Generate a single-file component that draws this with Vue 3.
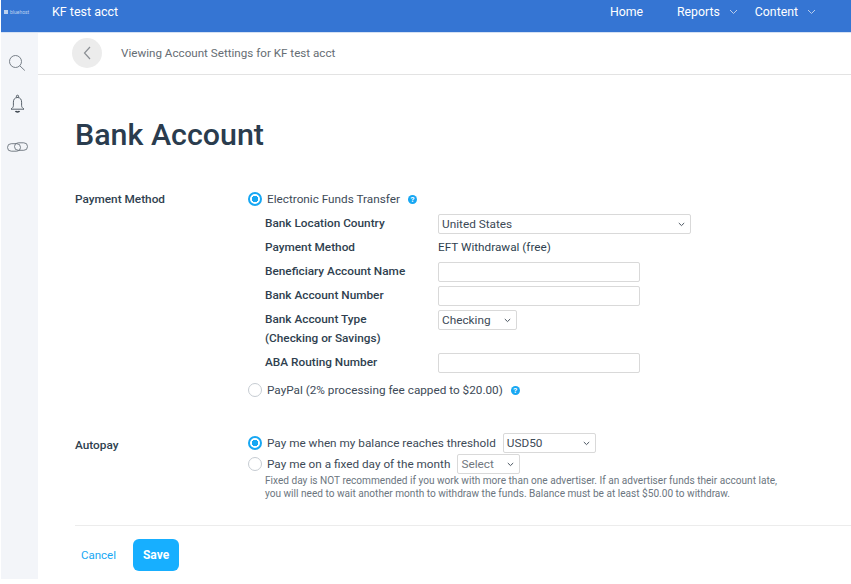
<template>
  <div class="page">
    <header class="topbar">
      <div class="brand"><span class="brand-mark"></span>bluehost</div>
      <div class="account">KF test acct</div>
      <nav class="nav">
        <a class="nav-item nav-home">Home</a>
        <a class="nav-item nav-reports">Reports
          <svg class="nav-caret" width="9" height="6" viewBox="0 0 9 6"><path d="M1 1l3.500 3.500L8 1" fill="none" stroke="#b9cdec" stroke-width="1"/></svg>
        </a>
        <a class="nav-item nav-content">Content
          <svg class="nav-caret" width="9" height="6" viewBox="0 0 9 6"><path d="M1 1l3.500 3.500L8 1" fill="none" stroke="#b9cdec" stroke-width="1"/></svg>
        </a>
      </nav>
    </header>

    <div class="shell">
      <aside class="sidebar">
        <svg class="side-icon" width="16" height="16" viewBox="0 0 16 16" fill="none" stroke="#6a737c" stroke-width=".9">
          <circle cx="6.500" cy="6.500" r="6"/>
          <path d="M10.800 10.800l5 4.700"/>
        </svg>
        <svg class="side-icon" width="15" height="20" viewBox="0 0 15 20" fill="none" stroke="#4a545e" stroke-width=".9">
          <path d="M7.500 3.500c-2.900 0-4.100 2.100-4.100 4.700v3.500c0 1.300-1 2.300-2.400 3.500h13c-1.400-1.200-2.400-2.200-2.400-3.500V8.200c0-2.600-1.200-4.700-4.100-4.700z"/>
          <circle cx="7.500" cy="2.300" r="1.100"/>
          <path d="M5.500 17c.6 1.200 3.400 1.200 4 0" stroke-width="1.500" stroke="#39424c"/>
        </svg>
        <svg class="side-icon" width="21" height="10" viewBox="0 0 21 10" fill="none" stroke="#6a737c" stroke-width=".9">
          <rect x=".5" y="1.700" width="13" height="7.500" rx="3.750"/>
          <rect x="7.500" y=".8" width="13" height="7.500" rx="3.750"/>
        </svg>
      </aside>

      <main class="main">
        <div class="subbar">
          <button class="back" type="button">
            <svg width="8" height="14" viewBox="0 0 8 14"><path d="M7 1L1.500 7 7 13" fill="none" stroke="#8b8f94" stroke-width="1.200"/></svg>
          </button>
          <span class="subbar-text">Viewing Account Settings for KF test acct</span>
        </div>

        <div class="content">
          <h1 class="title">Bank Account</h1>

          <section class="section">
            <div class="section-label">Payment Method</div>
            <div class="section-body">
              <div class="radio-row">
                <span class="radio is-on"></span>
                <span class="radio-text">Electronic Funds Transfer</span>
                <span class="help">?</span>
              </div>
              <div class="fields">
                <template v-for="field in fields" :key="field.label">
                  <div class="field-label" :class="{ tall: field.tall }">
                    <span v-for="line in field.label.split('|')" :key="line" class="label-line">{{ line }}</span>
                  </div>
                  <div class="field-value">
                    <div v-if="field.type === 'select'" class="select" :class="field.size">
                      <span>{{ field.value }}</span>
                      <svg width="7" height="5" viewBox="0 0 7 5"><path d="M.8 1l2.700 2.600L6.200 1" fill="none" stroke="#4a5560" stroke-width="1"/></svg>
                    </div>
                    <span v-else-if="field.type === 'text'" class="plain">{{ field.value }}</span>
                    <input v-else class="input" type="text" />
                  </div>
                </template>
              </div>
              <div class="radio-row paypal">
                <span class="radio"></span>
                <span class="radio-text">PayPal (2% processing fee capped to $20.00)</span>
                <span class="help">?</span>
              </div>
            </div>
          </section>

          <section class="section autopay">
            <div class="section-label">Autopay</div>
            <div class="section-body">
              <div class="radio-row pay-row">
                <span class="radio is-on"></span>
                <span class="radio-text">Pay me when my balance reaches threshold</span>
                <div class="select usd">
                  <span>USD50</span>
                  <svg width="7" height="5" viewBox="0 0 7 5"><path d="M.8 1l2.700 2.600L6.200 1" fill="none" stroke="#4a5560" stroke-width="1"/></svg>
                </div>
              </div>
              <div class="radio-row pay-row second">
                <span class="radio"></span>
                <span class="radio-text">Pay me on a fixed day of the month</span>
                <div class="select day">
                  <span>Select</span>
                  <svg width="7" height="5" viewBox="0 0 7 5"><path d="M.8 1l2.700 2.600L6.200 1" fill="none" stroke="#4a5560" stroke-width="1"/></svg>
                </div>
              </div>
              <p class="note">Fixed day is NOT recommended if you work with more than one advertiser. If an advertiser funds their account late, you will need to wait another month to withdraw the funds. Balance must be at least $50.00 to withdraw.</p>
            </div>
          </section>

          <footer class="actions">
            <a class="cancel">Cancel</a>
            <button class="save" type="button">Save</button>
          </footer>
        </div>
      </main>
    </div>
  </div>
</template>

<script setup>
const fields = [
  { label: 'Bank Location Country', type: 'select', value: 'United States', size: 'wide' },
  { label: 'Payment Method', type: 'text', value: 'EFT Withdrawal (free)' },
  { label: 'Beneficiary Account Name', type: 'input' },
  { label: 'Bank Account Number', type: 'input' },
  { label: 'Bank Account Type|(Checking or Savings)', type: 'select', value: 'Checking', size: 'small', tall: true },
  { label: 'ABA Routing Number', type: 'input' }
]
</script>

<style>
html,
body {
  margin: 0;
  background: #ffffff;
}
</style>

<style scoped>
.page {
  width: 851px;
  height: 584px;
  overflow: hidden;
  display: flex;
  flex-direction: column;
  padding-left: 1px;
  box-sizing: border-box;
  font-family: Roboto, "Liberation Sans", sans-serif;
  font-size: 11.75px;
  color: #2f3f4f;
  background: #ffffff;
}

.topbar {
  height: 33px;
  flex-shrink: 0;
  display: flex;
  align-items: flex-start;
  background: #3575d3;
  border-bottom: 1px solid #d5e1f3;
  box-sizing: border-box;
  color: #ffffff;
}

.brand {
  width: 51px;
  height: 24px;
  display: flex;
  align-items: center;
  padding-left: 3px;
  box-sizing: border-box;
  font-size: 5px;
  color: #bcd1ef;
}

.brand-mark {
  width: 4px;
  height: 4px;
  margin-right: 2px;
  background: #bcd1ef;
}

.account {
  line-height: 24px;
  font-size: 12.5px;
}

.nav {
  margin-left: auto;
  display: flex;
  height: 24px;
  align-items: center;
  padding-right: 35px;
  font-size: 12.3px;
}

.nav-item {
  display: flex;
  align-items: center;
}

.nav-home {
  margin-right: 34px;
}

.nav-reports {
  margin-right: 17px;
}

.nav-caret {
  margin-left: 9px;
}

.shell {
  flex: 1;
  min-height: 0;
  display: flex;
}

.sidebar {
  width: 37px;
  height: 546px;
  flex-shrink: 0;
  display: flex;
  flex-direction: column;
  align-items: center;
  background: #f3f5f9;
  padding: 22px 5px 0 0;
  box-sizing: border-box;
}

.side-icon:nth-child(2) {
  margin-top: 23px;
}

.side-icon:nth-child(3) {
  margin-top: 28px;
}

.main {
  flex: 1;
  min-width: 0;
}

.subbar {
  height: 42px;
  box-sizing: border-box;
  display: flex;
  align-items: center;
  padding: 0 0 2px 34px;
  border-bottom: 1px solid #e3e3e3;
}

.back {
  width: 30px;
  height: 30px;
  padding: 0;
  border: 0;
  border-radius: 50%;
  background: #ececec;
  display: flex;
  align-items: center;
  justify-content: center;
}

.subbar-text {
  margin-left: 19px;
  font-size: 11.65px;
  color: #666d74;
}

.content {
  padding-left: 37px;
}

.title {
  margin: 41px 0 0;
  font-size: 30.4px;
  line-height: 38px;
  font-weight: 500;
  color: #2a3c4e;
}

.section {
  display: grid;
  grid-template-columns: 173px 1fr;
  margin-top: 33px;
}

.section-label {
  line-height: 24px;
  font-weight: 500;
  font-size: 11.8px;
}

.radio-row {
  display: flex;
  align-items: center;
  height: 24px;
}

.radio {
  width: 14px;
  height: 14px;
  flex-shrink: 0;
  box-sizing: border-box;
  border: 1.5px solid #c6ccd2;
  border-radius: 50%;
  background: #ffffff;
  margin-right: 5px;
}

.radio.is-on {
  border: 2px solid #17a7f3;
  background: radial-gradient(circle, #17a7f3 0 3px, #ffffff 3.5px);
}

.radio-text {
  color: #3d4a57;
}

.help {
  width: 9px;
  height: 9px;
  margin-left: 8px;
  border-radius: 50%;
  background: #17a7f3;
  color: #ffffff;
  font-size: 8px;
  font-weight: 700;
  line-height: 9px;
  text-align: center;
}

.fields {
  display: grid;
  grid-template-columns: 173px 1fr;
  padding-left: 17px;
  grid-auto-rows: minmax(24px, auto);
}

.field-label {
  display: flex;
  flex-direction: column;
  font-size: 11.8px;
  font-weight: 500;
}

.label-line {
  line-height: 24px;
  height: 24px;
}

.label-line + .label-line {
  line-height: 14px;
  height: 19px;
}

.field-value {
  display: flex;
  align-items: flex-start;
  min-height: 24px;
  padding-top: 3px;
  box-sizing: border-box;
}

.plain {
  margin-top: -3px;
  line-height: 24px;
}

.input,
.select {
  height: 20px;
  box-sizing: border-box;
  border: 1px solid #d9d9d9;
  border-radius: 2px;
  background: #ffffff;
}

.input {
  display: block;
  width: 202px;
  padding: 0;
  outline: none;
}

.select {
  display: flex;
  align-items: center;
  justify-content: space-between;
  padding: 0 5px 0 3px;
  font-size: 11.8px;
  color: #3d4a57;
}

.wide {
  width: 253px;
}

.small {
  width: 79px;
}

.usd {
  width: 93px;
  margin-left: 7px;
}

.day {
  width: 63px;
  margin-left: 7px;
  color: #70777e;
}

.paypal {
  margin-top: 4px;
}

.autopay {
  margin-top: 31px;
}

.pay-row {
  height: 20px;
}

.second {
  margin-top: 1px;
}

.note {
  margin: 0 0 0 17px;
  width: 530px;
  font-size: 10.1px;
  line-height: 13px;
  color: #6c7680;
}

.actions {
  margin-top: 25px;
  height: 52px;
  box-sizing: border-box;
  border-top: 1px solid #ececec;
  display: flex;
  align-items: center;
  padding: 7px 0 0 6px;
}

.cancel {
  color: #17a7f3;
  font-size: 11.5px;
}

.save {
  margin-left: 17px;
  width: 46px;
  height: 32px;
  border: 0;
  border-radius: 6px;
  background: #17afff;
  color: #ffffff;
  font-family: inherit;
  font-size: 12px;
  font-weight: 700;
}
</style>
